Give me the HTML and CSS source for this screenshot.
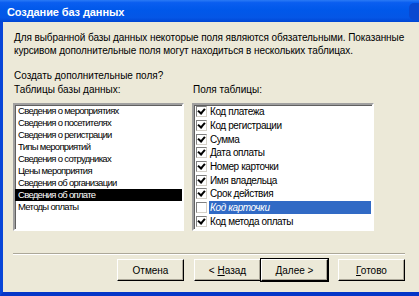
FILE: index.html
```html
<!DOCTYPE html>
<html>
<head>
	<meta charset="UTF-8">
	<title>Создание баз данных</title>
	<link rel="stylesheet" href="styles.css">
</head>
<body>
	<div class="window">
		<div class="titlebar">
			<span class="title">Создание баз данных</span>
			<span class="tbButton"></span>
		</div>

		<div class="frame">
			<p class="desc">Для выбранной базы данных некоторые поля являются обязательными. Показанные<br>курсивом дополнительные поля могут находиться в нескольких таблицах.</p>
			<p class="question">Создать дополнительные поля?</p>

			<div class="lists">
				<div class="col colLeft">
					<div class="label">Таблицы базы данных:</div>
					<ul class="listbox tables">
						<li>Сведения о мероприятиях</li>
						<li>Сведения о посетителях</li>
						<li>Сведения о регистрации</li>
						<li>Типы мероприятий</li>
						<li>Сведения о сотрудниках</li>
						<li>Цены мероприятия</li>
						<li>Сведения об организации</li>
						<li class="selected">Сведения об оплате</li>
						<li>Методы оплаты</li>
					</ul>
				</div>
				<div class="col colRight">
					<div class="label">Поля таблицы:</div>
					<ul class="listbox fields">
						<li><span class="check on"></span><span class="name">Код платежа</span></li>
						<li><span class="check on"></span><span class="name">Код регистрации</span></li>
						<li><span class="check on"></span><span class="name">Сумма</span></li>
						<li><span class="check on"></span><span class="name">Дата оплаты</span></li>
						<li><span class="check on"></span><span class="name">Номер карточки</span></li>
						<li><span class="check on"></span><span class="name">Имя владельца</span></li>
						<li><span class="check on"></span><span class="name">Срок действия</span></li>
						<li class="selected"><span class="check"></span><span class="name italic">Код карточки</span></li>
						<li><span class="check on"></span><span class="name">Код метода оплаты</span></li>
					</ul>
				</div>
			</div>

			<div class="separator"></div>

			<div class="buttons">
				<button type="button" class="boton" id="botonCancelar">Отмена</button>
				<button type="button" class="boton" id="botonAtras">&lt; <u>Н</u>азад</button>
				<button type="button" class="boton default" id="botonSiguiente"><u>Д</u>алее &gt;</button>
				<button type="button" class="boton" id="botonListo"><u>Г</u>отово</button>
			</div>
		</div>
	</div>
</body>
</html>
```

FILE: styles.css
```css
body{
	margin: 0;
	background: #ECE9D8;
	font-family: "Liberation Sans", Arial, sans-serif;
	font-size: 10px;
	color: #000;
	overflow: hidden;
}

.window{
	width: 419px;
	height: 296px;
	display: flex;
	flex-direction: column;
	background: #ECE9D8;
}

.titlebar{
	height: 22px;
	flex: none;
	display: flex;
	align-items: center;
	padding-left: 7px;
	color: #fff;
	font-size: 11px;
	font-weight: bold;
	background: linear-gradient(#2a7af5 0%, #0a5ef0 12%, #0058ea 45%, #0456e6 80%, #0046d4 100%);
}

.title{
	flex: 1;
	padding-top: 1px;
	letter-spacing: -0.1px;
}

.tbButton{
	width: 16px;
	height: 17px;
	margin-right: -6px;
	border-radius: 5px;
	background: #0a48d0;
}

.frame{
	flex: 1;
	display: flex;
	flex-direction: column;
	border-left: 3px solid #0846d8;
	border-bottom: 4px solid #0536c8;
	padding: 9px 14px 0 10px;
}

.desc{
	margin: 0 0 0 1px;
	line-height: 13px;
	white-space: nowrap;
	letter-spacing: -0.08px;
}

.question{
	margin: 12px 0 0 1px;
	line-height: 13px;
}

.lists{
	display: flex;
	gap: 8px;
	margin-top: 1px;
}

.label{
	line-height: 13px;
	margin-bottom: 7px;
	padding-left: 1px;
}

.colLeft{
	width: 171px;
}

.colRight{
	width: 182px;
}

.listbox{
	list-style: none;
	margin: 0;
	padding: 0;
	height: 124px;
	background: #fff;
	border: 2px solid;
	border-color: #a0a0a0 #fff #fff #a0a0a0;
	box-shadow: inset 1px 1px 0 #606060;
	overflow: hidden;
}

.tables li{
	height: 12px;
	line-height: 12px;
	padding-left: 3px;
	font-size: 9.5px;
	letter-spacing: -0.7px;
	white-space: nowrap;
}

.tables li.selected{
	background: #000;
	color: #fff;
}

.fields li{
	height: 13.7px;
	display: flex;
	align-items: center;
	padding-left: 2px;
	white-space: nowrap;
}

.check{
	width: 9px;
	height: 9px;
	flex: none;
	border: 1px solid;
	border-color: #808080 #d4d0c8 #d4d0c8 #808080;
	background: #fff;
	position: relative;
}

.check.on::after{
	content: "";
	position: absolute;
	left: 2px;
	top: 0px;
	width: 3px;
	height: 5px;
	border: solid #000;
	border-width: 0 2px 2px 0;
	transform: rotate(40deg);
}

.name{
	flex: 1;
	margin-left: 2px;
	margin-right: 1px;
	padding-left: 1px;
	line-height: 13px;
	letter-spacing: -0.4px;
}

.fields li.selected .name{
	background: #316ac5;
	color: #fff;
}

.italic{
	font-style: italic;
}

.separator{
	margin-top: 22px;
	border-top: 1px solid #aca899;
	border-bottom: 1px solid #fff;
	height: 0;
}

.buttons{
	display: flex;
	justify-content: flex-end;
	margin-top: 4px;
}

.boton{
	width: 67px;
	height: 22px;
	margin: 0;
	padding: 0;
	font-family: "Liberation Sans", Arial, sans-serif;
	font-size: 10px;
	color: #000;
	background: #ECE9D8;
	border: 1px solid;
	border-color: #fff #000 #000 #fff;
	box-shadow: inset -1px -1px 0 #aca899;
	border-radius: 0;
}

#botonCancelar, #botonSiguiente{
	margin-right: 10px;
}

.boton.default{
	outline: 1px solid #000;
}
```
